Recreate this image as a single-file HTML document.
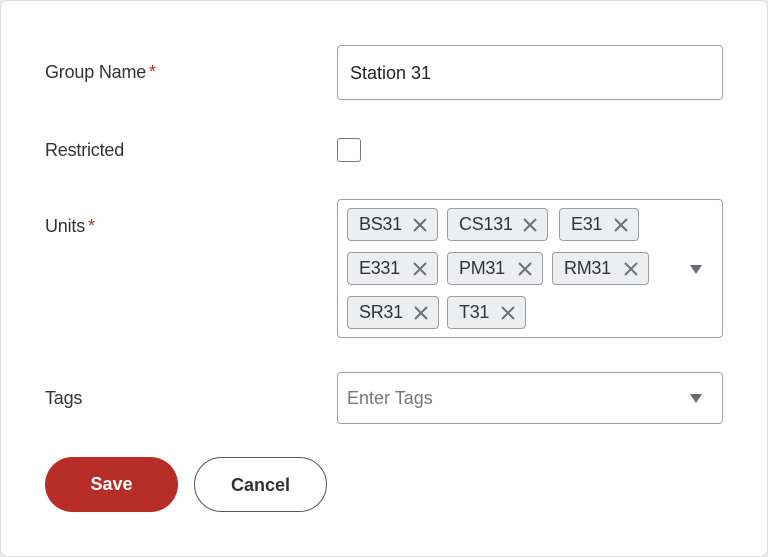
<!DOCTYPE html>
<html><head><style>
body{margin:0;background:#e9e9e9;font-family:"Liberation Sans",Arial,sans-serif;}
.card{position:absolute;left:0;top:0;width:768px;height:557px;box-sizing:border-box;background:#fff;border:1px solid #ddd;border-radius:8px;}
.card>*{margin-left:-1px;margin-top:-1px;}
.lbl{position:absolute;left:45px;font-size:18px;color:#333;letter-spacing:-0.2px;}
.req{color:#c0302a;margin-left:3px;}
.input{position:absolute;left:337px;width:386px;border:1px solid #a0a0a0;border-radius:4px;box-sizing:border-box;background:#fff;}
.chip{position:absolute;height:33px;box-sizing:border-box;border:1px solid #9a9ea3;border-radius:4px;background:#eceef0;font-size:18px;color:#333;line-height:31px;padding-left:11px;letter-spacing:-0.3px;}
.chip svg{position:absolute;right:10px;top:9px;}
.tri{position:absolute;width:0;height:0;border-left:6px solid transparent;border-right:6px solid transparent;border-top:9px solid #666c72;}
.btn{position:absolute;top:457px;height:55px;border-radius:28px;box-sizing:border-box;font-size:18px;font-weight:bold;text-align:center;line-height:55px;}
</style></head><body>
<div class="card">
<div class="lbl" style="top:62px">Group Name<span class="req">*</span></div>
<div class="input" style="top:45px;height:55px;font-size:18px;color:#222;padding:17px 0 0 12px;">Station 31</div>
<div class="lbl" style="top:140px">Restricted</div>
<div style="position:absolute;left:337px;top:138px;width:24px;height:24px;border:1px solid #777;border-radius:3px;box-sizing:border-box"></div>
<div class="lbl" style="top:216px">Units<span class="req">*</span></div>
<div class="input" style="top:199px;height:139px;"></div>
<div class="chip" style="left:347px;top:208px;width:91px">BS31<svg width="14" height="14"><path d="M1 1L13 13M13 1L1 13" stroke="#6b7177" stroke-width="2"/></svg></div>
<div class="chip" style="left:447px;top:208px;width:101px">CS131<svg width="14" height="14"><path d="M1 1L13 13M13 1L1 13" stroke="#6b7177" stroke-width="2"/></svg></div>
<div class="chip" style="left:559px;top:208px;width:80px">E31<svg width="14" height="14"><path d="M1 1L13 13M13 1L1 13" stroke="#6b7177" stroke-width="2"/></svg></div>
<div class="chip" style="left:347px;top:252px;width:91px">E331<svg width="14" height="14"><path d="M1 1L13 13M13 1L1 13" stroke="#6b7177" stroke-width="2"/></svg></div>
<div class="chip" style="left:447px;top:252px;width:96px">PM31<svg width="14" height="14"><path d="M1 1L13 13M13 1L1 13" stroke="#6b7177" stroke-width="2"/></svg></div>
<div class="chip" style="left:552px;top:252px;width:97px">RM31<svg width="14" height="14"><path d="M1 1L13 13M13 1L1 13" stroke="#6b7177" stroke-width="2"/></svg></div>
<div class="chip" style="left:347px;top:296px;width:92px">SR31<svg width="14" height="14"><path d="M1 1L13 13M13 1L1 13" stroke="#6b7177" stroke-width="2"/></svg></div>
<div class="chip" style="left:447px;top:296px;width:79px">T31<svg width="14" height="14"><path d="M1 1L13 13M13 1L1 13" stroke="#6b7177" stroke-width="2"/></svg></div>
<div class="tri" style="left:690px;top:265px"></div>
<div class="lbl" style="top:388px">Tags</div>
<div class="input" style="top:372px;height:52px;font-size:18px;color:#777;padding:15px 0 0 9px;">Enter Tags</div>
<div class="tri" style="left:690px;top:394px"></div>
<div class="btn" style="left:45px;width:133px;background:#b72d27;color:#fff;">Save</div>
<div class="btn" style="left:194px;width:133px;border:1px solid #555;color:#333;background:#fff;">Cancel</div>
</div>
</body></html>
